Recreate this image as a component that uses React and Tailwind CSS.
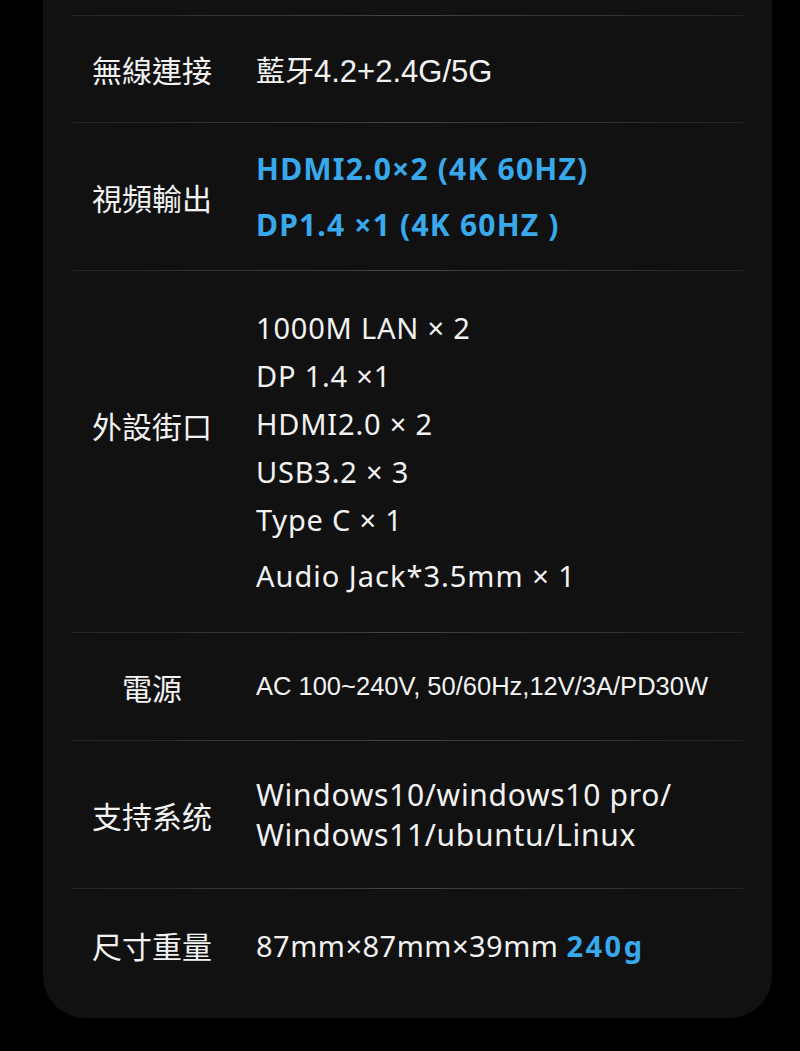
const sans = "font-['Noto_Sans','Noto_Sans_CJK_TC',sans-serif]";
const cjk = "font-['Noto_Sans_CJK_TC','Noto_Sans',sans-serif]";
const arial = "font-['Liberation_Sans','Noto_Sans_CJK_TC',sans-serif]";

function Divider() {
  return <div className="h-px bg-linear-to-r from-[#242424] via-[#444444] to-[#242424]" />;
}

function Row({ label, height, labelClass = '', children }) {
  return (
    <div className={`flex items-center ${height}`}>
      <div className={`ml-[19px] w-[122px] shrink-0 text-center text-[30px] leading-none text-[#f2f2f2] ${cjk} ${labelClass}`}>
        {label}
      </div>
      <div className="ml-[43px] text-[#f2f2f2]">{children}</div>
    </div>
  );
}

const ports = ['1000M LAN × 2', 'DP 1.4 ×1', 'HDMI2.0 × 2', 'USB3.2 × 3', 'Type C × 1'];

export default function App() {
  return (
    <div className="min-h-[1051px] bg-black">
      <div className="ml-[43px] w-[729px] rounded-b-[42px] bg-[#111111] px-[29px] pt-[15px] pb-[17px]">
        <Divider />
        <Row label="無線連接" height="h-[106px]">
          <p className={`mt-[3px] text-[31px] leading-none ${arial}`}>
            <span className={`text-[29px] ${cjk}`}>藍牙</span>4.2+2.4G/5G
          </p>
        </Row>
        <Divider />
        <Row label="視頻輸出" height="h-[147px]">
          <div className={`text-[30px] font-bold leading-[56px] tracking-[1.2px] text-[#38a9ec] ${sans}`}>
            <p>HDMI2.0×2 (4K 60HZ)</p>
            <p>DP1.4 ×1 (4K 60HZ )</p>
          </div>
        </Row>
        <Divider />
        <Row label="外設街口" height="h-[361px]" labelClass="mb-[54px]">
          <div className={`text-[29px] leading-[48px] tracking-[0.8px] ${sans}`}>
            {ports.map((p) => (
              <p key={p}>{p}</p>
            ))}
            <p className="mt-[8px] tracking-[1px]">Audio Jack*3.5mm × 1</p>
          </div>
        </Row>
        <Divider />
        <Row label="電源" height="h-[107px]">
          <p className={`text-[25.5px] leading-none ${arial}`}>AC 100~240V, 50/60Hz,12V/3A/PD30W</p>
        </Row>
        <Divider />
        <Row label="支持系统" height="h-[147px]">
          <div className={`text-[30px] leading-[40px] tracking-[0.7px] ${sans}`}>
            <p>Windows10/windows10 pro/</p>
            <p>Windows11/ubuntu/Linux</p>
          </div>
        </Row>
        <Divider />
        <Row label="尺寸重量" height="h-[112px]">
          <p className={`text-[29px] leading-none tracking-[0.5px] ${sans}`}>
            87mm×87mm×39mm <span className="font-bold tracking-[2.5px] text-[#38a9ec]">240g</span>
          </p>
        </Row>
      </div>
    </div>
  );
}
